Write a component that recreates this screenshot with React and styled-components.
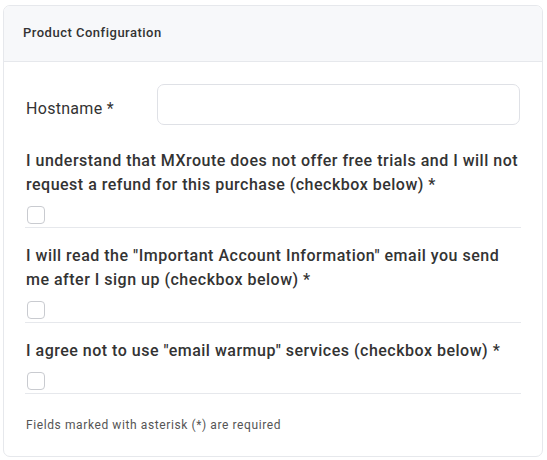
import React from "react";
import styled, { createGlobalStyle } from "styled-components";

const GlobalStyle = createGlobalStyle`
  html, body {
    margin: 0;
    padding: 0;
    background: #fff;
  }
  body {
    font-family: "Roboto", "Liberation Sans", sans-serif;
    color: #333;
  }
`;

const Page = styled.div`
  padding: 5px 4px 5px 3px;
`;

const Card = styled.section`
  border: 1px solid #e6e8ec;
  border-radius: 7px;
  background: #fff;
  overflow: hidden;
`;

const CardHeader = styled.header`
  background: #f7f8fa;
  border-bottom: 1px solid #e6e8ec;
  height: 56px;
  box-sizing: border-box;
  display: flex;
  align-items: center;
  padding: 0 19px 2px;
  font-size: 13px;
  font-weight: 500;
  letter-spacing: 0.5px;
  color: #333;
`;

const CardBody = styled.div`
  padding: 22px 21px 22px 21px;
`;

const HostRow = styled.div`
  display: grid;
  grid-template-columns: 132px 1fr;
  align-items: center;
  margin-bottom: 24px;
`;

const HostLabel = styled.label`
  font-size: 16px;
  letter-spacing: 0.3px;
  color: #333;
  padding: 7px 0 0 1px;
`;

const TextInput = styled.input`
  height: 41px;
  box-sizing: border-box;
  border: 1px solid #dfe1e6;
  border-radius: 7px;
  outline: none;
  padding: 0 12px;
  font: inherit;
  margin-right: 1px;
`;

const Question = styled.div`
  border-bottom: 1px solid #e6e8ec;
  padding-bottom: 3px;
  margin-bottom: 16px;
`;

const QuestionLabel = styled.p`
  margin: 0 0 9px 1px;
  font-size: 16px;
  font-weight: 500;
  line-height: 24px;
  letter-spacing: 0.5px;
  color: #333;
`;

const Box = styled.input.attrs({ type: "checkbox" })`
  appearance: none;
  display: block;
  width: 18px;
  height: 18px;
  margin: 0 0 0 2px;
  border: 1px solid #c9cbd0;
  border-radius: 4px;
  background: #fff;
`;

const Note = styled.p`
  margin: 0;
  padding-top: 6px;
  font-size: 12px;
  line-height: 18px;
  letter-spacing: 0.6px;
  color: #555;
  padding-left: 1px;
`;

const questions = [
  "I understand that MXroute does not offer free trials and I will not request a refund for this purchase (checkbox below) *",
  'I will read the "Important Account Information" email you send me after I sign up (checkbox below) *',
  'I agree not to use "email warmup" services (checkbox below) *',
];

export default function App() {
  return (
    <Page>
      <GlobalStyle />
      <Card>
        <CardHeader>Product Configuration</CardHeader>
        <CardBody>
          <HostRow>
            <HostLabel htmlFor="hostname">Hostname *</HostLabel>
            <TextInput id="hostname" type="text" />
          </HostRow>
          {questions.map((q) => (
            <Question key={q}>
              <QuestionLabel>{q}</QuestionLabel>
              <Box />
            </Question>
          ))}
          <Note>Fields marked with asterisk (*) are required</Note>
        </CardBody>
      </Card>
    </Page>
  );
}
